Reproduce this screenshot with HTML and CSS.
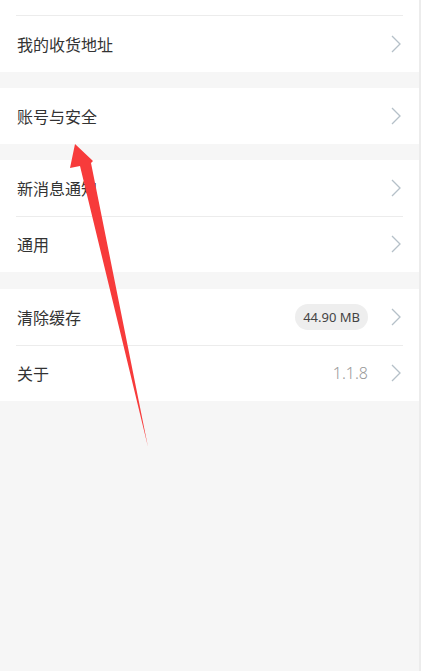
FILE: index.html
```html
<!DOCTYPE html>
<html lang="zh-CN">
<head>
    <meta charset="UTF-8">
    <meta name="viewport" content="width=device-width, initial-scale=1.0">
    <title>设置</title>
    <link rel="stylesheet" href="styles.css">
</head>
<body>
    <div class="page">
        <div class="group">
            <div class="row partial"></div>
            <div class="row first-full">
                <span class="label">我的收货地址</span>
                <svg class="chevron" viewBox="0 0 10 18"><polyline points="1,1 9,9 1,17"/></svg>
            </div>
        </div>

        <div class="group">
            <div class="row">
                <span class="label">账号与安全</span>
                <svg class="chevron" viewBox="0 0 10 18"><polyline points="1,1 9,9 1,17"/></svg>
            </div>
        </div>

        <div class="group">
            <div class="row">
                <span class="label">新消息通知</span>
                <svg class="chevron" viewBox="0 0 10 18"><polyline points="1,1 9,9 1,17"/></svg>
            </div>
            <div class="row">
                <span class="label">通用</span>
                <svg class="chevron" viewBox="0 0 10 18"><polyline points="1,1 9,9 1,17"/></svg>
            </div>
        </div>

        <div class="group last">
            <div class="row">
                <span class="label">清除缓存</span>
                <span class="pill">44.90 MB</span>
                <svg class="chevron" viewBox="0 0 10 18"><polyline points="1,1 9,9 1,17"/></svg>
            </div>
            <div class="row">
                <span class="label">关于</span>
                <span class="version">1.1.8</span>
                <svg class="chevron" viewBox="0 0 10 18"><polyline points="1,1 9,9 1,17"/></svg>
            </div>
        </div>

        <!-- annotation arrow drawn over the screenshot -->
        <svg class="arrow" viewBox="0 0 421 671" width="421" height="671">
            <polygon points="75,144 93,161 91,163 148,447 80,166 70,168"/>
        </svg>
    </div>
</body>
</html>
```

FILE: styles.css
```css
html, body {
    margin: 0;
    padding: 0;
}
body {
    font-family: "Noto Sans CJK SC", "Noto Sans", sans-serif;
    background-color: #f6f6f6;
    color: #333;
    width: 421px;
    height: 671px;
    overflow: hidden;
}
.page {
    position: relative;
    width: 419px;
    height: 671px;
    border-right: 2px solid #ececec;
    display: flex;
    flex-direction: column;
    gap: 16px;
}
.group {
    background-color: #ffffff;
}
.group.last {
    margin-top: 1px;
}
.row {
    position: relative;
    height: 56px;
    box-sizing: border-box;
    display: flex;
    align-items: center;
    padding: 0 18px 0 17px;
}
.row + .row::before {
    content: "";
    position: absolute;
    top: 0;
    left: 16px;
    right: 16px;
    height: 1px;
    background-color: #ececec;
}
.row.partial {
    height: 15px;
}
.row.first-full {
    height: 57px;
}
.label {
    flex: 1;
    font-size: 16px;
    color: #333;
}
.pill {
    font-family: "Noto Sans", sans-serif;
    font-size: 13px;
    color: #444;
    background-color: #eeeeee;
    border-radius: 13px;
    height: 26px;
    line-height: 26px;
    padding: 0 8px;
    margin-right: 23px;
}
.version {
    font-family: "Noto Sans", sans-serif;
    font-weight: 300;
    font-size: 16px;
    color: #999;
    margin-right: 23px;
}
.chevron {
    width: 10px;
    height: 18px;
    fill: none;
    stroke: #b5c0c8;
    stroke-width: 1.3;
}
.arrow {
    position: absolute;
    top: 0;
    left: 0;
    pointer-events: none;
}
.arrow polygon {
    fill: #f73b3b;
}
```
